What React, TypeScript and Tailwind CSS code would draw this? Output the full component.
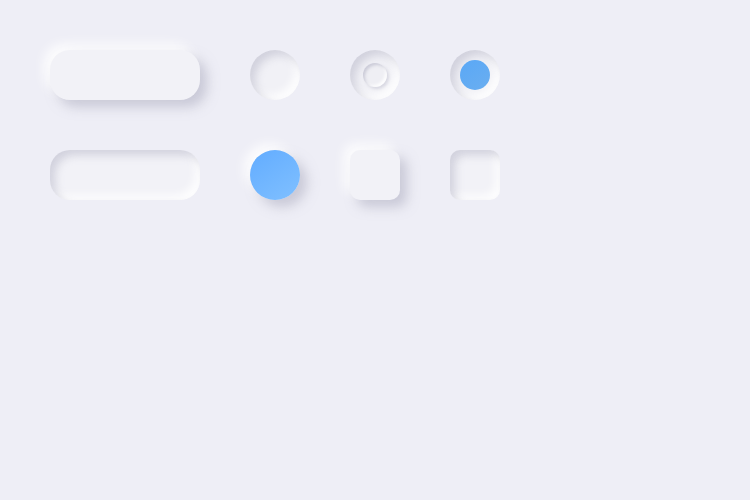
export default function App() {
  const raised = "shadow-[7px_7px_12px_rgba(165,165,185,0.5),-6px_-6px_12px_rgba(255,255,255,0.9)]";
  const inset = "shadow-[inset_5px_5px_8px_rgba(170,170,190,0.45),inset_-5px_-5px_8px_rgba(255,255,255,0.9)]";
  return (
    <div className="w-[750px] h-[500px] bg-[#eeeef6] p-[50px] flex flex-col gap-[50px]">
      <div className="flex gap-[50px] items-center">
        <div className={`w-[150px] h-[50px] rounded-[20px] bg-[#f2f2f7] ${raised}`} />
        <div className={`w-[50px] h-[50px] rounded-full bg-[#f1f1f6] ${inset}`} />
        <div className={`w-[50px] h-[50px] rounded-full bg-[#f1f1f6] ${inset} flex items-center justify-center`}>
          <div className="w-[24px] h-[24px] rounded-full bg-[#efeff4] shadow-[inset_2px_2px_3px_rgba(170,170,190,0.5),inset_-2px_-2px_3px_rgba(255,255,255,0.9),2px_2px_3px_rgba(170,170,190,0.35)]" />
        </div>
        <div className={`w-[50px] h-[50px] rounded-full bg-[#f1f1f6] ${inset} flex items-center justify-center`}>
          <div className="w-[30px] h-[30px] rounded-full bg-[linear-gradient(145deg,#5aa8f6,#6aaef0)]" />
        </div>
      </div>
      <div className="flex gap-[50px] items-center">
        <div className={`w-[150px] h-[50px] rounded-[20px] bg-[#f2f2f7] ${inset}`} />
        <div className={`w-[50px] h-[50px] rounded-full bg-[linear-gradient(145deg,#62acff,#80c0ff)] ${raised}`} />
        <div className={`w-[50px] h-[50px] rounded-[10px] bg-[#f2f2f7] ${raised}`} />
        <div className={`w-[50px] h-[50px] rounded-[10px] bg-[#f2f2f7] ${inset}`} />
      </div>
    </div>
  );
}
